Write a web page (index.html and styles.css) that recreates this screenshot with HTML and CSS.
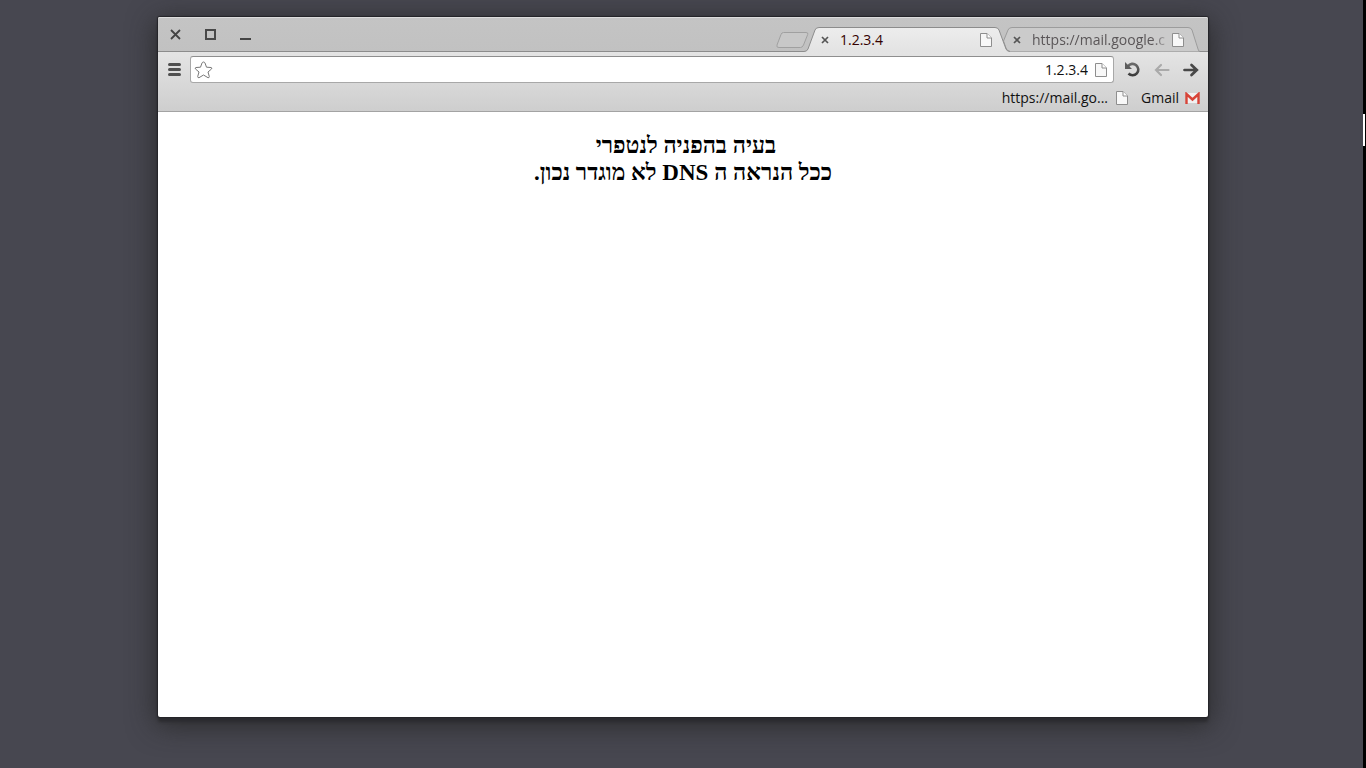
FILE: index.html
```
<!DOCTYPE html>
<html lang="he">
<head>
<meta charset="utf-8">
<title>1.2.3.4</title>
<link rel="stylesheet" href="styles.css">
</head>
<body>
<svg class="defs" width="0" height="0" aria-hidden="true">
  <defs>
    <linearGradient id="tabFill" x1="0" y1="0" x2="0" y2="1"><stop offset="0" stop-color="#ededed"/><stop offset="1" stop-color="#e3e3e3"/></linearGradient>
    <linearGradient id="ink" x1="0" y1="0" x2="0" y2="1"><stop offset="0" stop-color="#6a6a6a"/><stop offset="1" stop-color="#3c3c3c"/></linearGradient>
    <symbol id="page" viewBox="0 0 12 14"><path d="M.5.5H7L11.500 5v8.500H.5Z" fill="#f8f8f8" stroke="#8e8e8e"/><path d="M7 .5V5h4.500" fill="#fff" stroke="#8e8e8e"/></symbol>
    <symbol id="cross" viewBox="0 0 8 8"><path d="M1 1l6 6M7 1L1 7" stroke="#555" stroke-width="1.700"/></symbol>
  </defs>
</svg>
<main class="window">
  <header class="titlebar">
    <div class="controls">
      <button class="control" aria-label="Close"><svg width="12" height="12"><path d="M1 1l9 9M10 1l-9 9" stroke="#444" stroke-width="1.800"/></svg></button>
      <button class="control" aria-label="Maximize"><svg width="12" height="12"><path d="M1 1h9v9H1z" fill="none" stroke="#484848" stroke-width="2"/></svg></button>
      <button class="control" aria-label="Minimize"><svg width="12" height="12"><path d="M0 10h11" stroke="#444" stroke-width="2"/></svg></button>
    </div>
    <nav class="tabs">
      <button class="newtab" aria-label="New tab"><svg width="33" height="16"><path d="M7.500.5H30q2.500 0 1.700 2L27.500 13q-1 2.500-3 2.500H3Q0 15.500 1 13L5 2.500Q5.700.5 7.500.5Z" fill="#c8c8c8" stroke="#a0a0a0"/></svg></button>
      <div class="tab active">
        <svg class="shape" width="206" height="25"><path d="M0 24.500Q3 24.500 4 22L11 3Q12 .5 15 .5H191Q194 .5 195 3L202 22Q203 24.500 206 24.500V25H0Z" fill="url(#tabFill)"/><path d="M0 24.500Q3 24.500 4 22L11 3Q12 .5 15 .5H191Q194 .5 195 3L202 22Q203 24.500 206 24.500" fill="none" stroke="#8c8c8c"/></svg>
        <button class="close" aria-label="Close tab"><svg width="8" height="8"><use href="#cross"/></svg></button>
        <span class="label">1.2.3.4</span>
        <svg class="page" width="12" height="14"><use href="#page"/></svg>
      </div>
      <div class="tab">
        <svg class="shape" width="198" height="25"><path d="M8 24.500Q5 24 4 21L1.500 14 6 3Q7 .5 10 .5H186Q189 .5 190 3L197 24.500Z" fill="#cbcbcb"/><path d="M8 24.500Q5 24 4 21L1.500 14 6 3Q7 .5 10 .5H186Q189 .5 190 3L196 22Q196.500 24.500 198 24.500" fill="none" stroke="#9c9c9c"/></svg>
        <button class="close" aria-label="Close tab"><svg width="8" height="8"><use href="#cross"/></svg></button>
        <span class="label">https://mail.google.c</span>
        <svg class="page" width="12" height="14"><use href="#page"/></svg>
      </div>
    </nav>
  </header>
  <section class="toolbar">
    <div class="row">
      <button class="menu" aria-label="Menu"><svg width="13" height="13"><path d="M1.500 1.500h10M1.500 6.500h10M1.500 11.500h10" stroke="#505050" stroke-width="3" stroke-linecap="round"/></svg></button>
      <div class="omnibox">
        <button class="star" aria-label="Bookmark"><svg width="19" height="18"><path d="M9.500 1Q10.500 1 11 2L12.500 6.200 17 6.500Q18.500 7 17.500 8L14 11 15.300 15.500Q15.300 17 14 16.700L9.500 14 5 16.700Q3.700 17 3.700 15.500L5 11 1.500 8Q.5 7 2 6.500L6.500 6.200 8 2Q8.500 1 9.500 1Z" fill="#fff" stroke="#777"/></svg></button>
        <input class="address" aria-label="Address" value="1.2.3.4">
        <svg class="page" width="12" height="14"><use href="#page"/></svg>
      </div>
      <button class="nav" aria-label="Reload"><svg width="16" height="16"><path d="M3 4.200A5.700 5.700 0 1 1 3.500 11.500" fill="none" stroke="url(#ink)" stroke-width="2.600"/><path d="M0 0V7H7Z" fill="#5c5c5c"/></svg></button>
      <button class="nav" aria-label="Forward" disabled><svg width="16" height="16"><path d="M14.500 8H2M7 3L2 8 7 13" fill="none" stroke="#aaa" stroke-width="2.200" stroke-linecap="round"/></svg></button>
      <button class="nav" aria-label="Back"><svg width="16" height="16"><path d="M1.500 8H13M8.500 3L13.800 8 8.500 13" fill="none" stroke="#484848" stroke-width="2.700" stroke-linecap="round"/></svg></button>
    </div>
    <nav class="bookmarks">
      <a class="bookmark" href="#">https://mail.go...<svg width="12" height="14"><use href="#page"/></svg></a>
      <a class="bookmark gmail" href="#">Gmail<svg width="15" height="12"><path d="M1 1h13v10H1z" fill="#f1f1f1"/><path d="M1.500 12V2L7.500 7.500 13.500 2V12" fill="none" stroke="#d84438" stroke-width="2.400"/></svg></a>
    </nav>
  </section>
  <article class="content" dir="rtl">
    <h1 class="message">בעיה בהפניה לנטפרי&nbsp;<br>ככל הנראה ה DNS לא מוגדר נכון.</h1>
  </article>
</main>
<div class="edge"><div class="thumb"></div></div>
</body>
</html>
```
FILE: styles.css
```
* { box-sizing: border-box; }
body {
  margin: 0;
  min-height: 100vh;
  padding: 17px 158px 51px;
  display: flex;
  background: #474750;
  color: #111;
  font: 14px/20px "Open Sans", "Noto Sans", sans-serif;
}
button { padding: 0; border: 0; background: none; display: flex; align-items: center; justify-content: center; }
svg { display: block; flex: none; }
.defs { position: absolute; }
.window {
  flex: 1;
  min-width: 0;
  display: flex;
  flex-direction: column;
  background: #fff;
  border-radius: 2px;
  overflow: hidden;
  box-shadow: 0 0 1px 1px #242428, 0 5px 3px #2c2c30, 0 6px 28px 2px rgba(36, 36, 36, .85);
}
.titlebar {
  height: 35px;
  display: flex;
  justify-content: space-between;
  background: linear-gradient(#c4c4c4, #c1c1c1);
  border-top: 1px solid #ddd;
  box-shadow: inset 0 -1px #8c8c8c;
}
.controls { display: flex; gap: 23px; padding: 0 12px; }
.control { width: 12px; }
.tabs { display: flex; align-items: flex-end; padding-right: 8px; }
.newtab { margin: 0 -5px 4px 0; }
.tab {
  position: relative;
  width: 206px;
  height: 25px;
  display: flex;
  align-items: center;
  padding: 0 18px 0 17px;
}
.tab + .tab { width: 198px; margin-left: -8px; padding: 0 16px 0 11px; }
.active { z-index: 1; }
.shape { position: absolute; inset: 0; }
.close, .label, .page { position: relative; }
.label { flex: 1; min-width: 0; margin-left: 11px; white-space: nowrap; color: #300; }
.tab + .tab .label {
  color: #5a5658;
  -webkit-mask-image: linear-gradient(to left, transparent, #000 20px);
  mask-image: linear-gradient(to left, transparent, #000 20px);
}
.toolbar { background: linear-gradient(#e4e4e4, #cecece); border-bottom: 1px solid #a3a3a3; }
.row { display: flex; align-items: center; padding: 4px 9px 0 10px; }
.menu { width: 13px; margin-right: 9px; }
.omnibox {
  flex: 1;
  height: 27px;
  margin-right: 11px;
  padding: 0 6px 0 3px;
  display: flex;
  align-items: center;
  background: #fff;
  border: 1px solid #a8a8a8;
  border-top-color: #8e8e8e;
  border-radius: 3px;
}
.address { flex: 1; min-width: 0; padding: 0 7px; border: 0; outline: 0; background: none; color: #111; font: inherit; text-align: right; }
.nav { width: 16px; }
.nav + .nav { margin-left: 13px; }
.row .nav:nth-of-type(2) { margin-left: 0; }
.bookmarks { height: 28px; padding: 2px 8px 0 0; display: flex; justify-content: flex-end; align-items: center; gap: 13px; }
.bookmark { display: flex; align-items: center; gap: 8px; color: #111; text-decoration: none; }
.gmail { gap: 6px; }
.content { flex: 1; padding: 20px 8px; }
.message { margin: 0; text-align: center; color: #000; font: bold 23px/27px "Liberation Serif", "Times New Roman", serif; }
.edge { position: fixed; top: 0; right: 0; bottom: 0; width: 3px; padding-top: 114px; background: #000; }
.thumb { width: 2px; height: 32px; background: #fff; }
```
